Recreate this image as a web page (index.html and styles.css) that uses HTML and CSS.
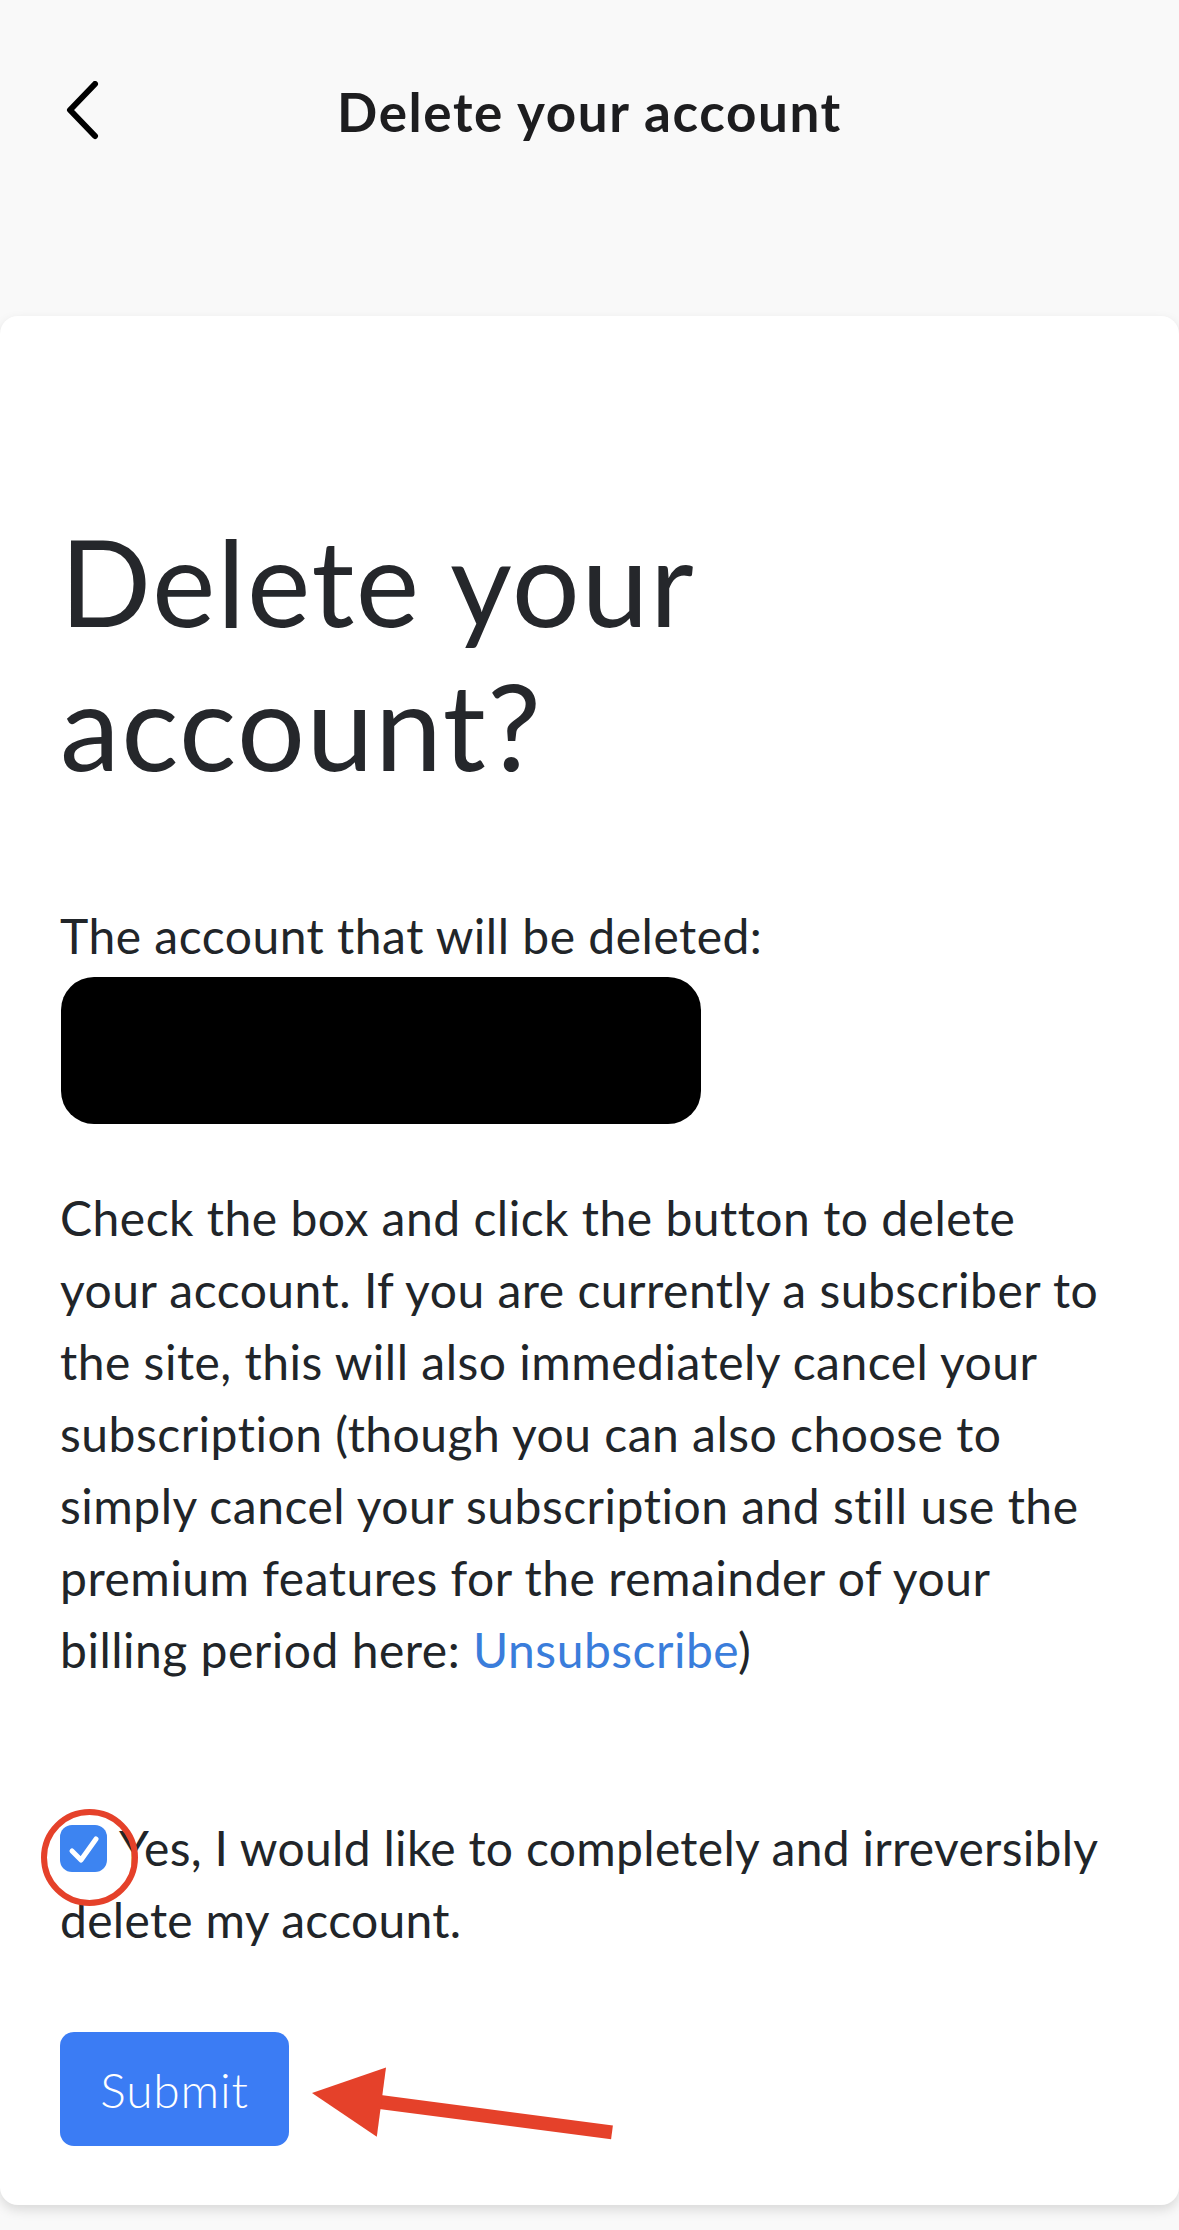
FILE: index.html
```html
<!DOCTYPE html>
<html lang="en">
<head>
<meta charset="utf-8">
<title>Delete your account</title>
<link rel="stylesheet" href="styles.css">
</head>
<body>
<header class="topbar">
  <button class="back" aria-label="Back">
    <svg width="40" height="64" viewBox="0 0 40 64"><path d="M29 3 L4 29 L29 55" fill="none" stroke="#000" stroke-width="6" stroke-linecap="round" stroke-linejoin="round"/></svg>
  </button>
  <h1 class="topbar-title">Delete your account</h1>
</header>
<main class="card">
  <h2 class="heading">Delete your account?</h2>
  <p class="account-label">The account that will be deleted:</p>
  <div class="redacted"></div>
  <p class="body-text">Check the box and click the button to delete your account. If you are currently a subscriber to the site, this will also immediately cancel your subscription (though you can also choose to simply cancel your subscription and still use the premium features for the remainder of your billing period here: <a class="link" href="#">Unsubscribe</a>)</p>
  <label class="confirm">
    <span class="check">
      <svg width="47" height="47" viewBox="0 0 47 47"><path d="M12 26 L21 35 L36 14" fill="none" stroke="#fff" stroke-width="5" stroke-linecap="round" stroke-linejoin="round"/></svg>
    </span>Yes, I would like to completely and irreversibly delete my account.
  </label>
  <div class="actions">
    <button class="submit">Submit</button>
    <svg class="arrow" width="330" height="90" viewBox="0 0 330 90">
      <line x1="78" y1="44.8" x2="312" y2="75.4" stroke="#e5412a" stroke-width="14"/>
      <polygon points="12,36 86,10.4 76.8,79.8" fill="#e5412a"/>
    </svg>
  </div>
</main>
</body>
</html>
```
FILE: styles.css
```css
* { box-sizing: border-box; }
html, body { margin: 0; padding: 0; }
body {
  background: #f9f9f9;
  font-family: Lato, "Noto Sans", sans-serif;
  color: #212529;
  min-height: 2230px;
}
.topbar {
  position: relative;
  height: 222px;
  display: flex;
  align-items: center;
  justify-content: center;
  margin-bottom: 94px;
}
.back {
  position: absolute;
  left: 66px;
  top: 81px;
  border: 0;
  background: none;
  padding: 0;
  width: 40px;
  height: 64px;
}
.back svg { display: block; }
.topbar-title {
  margin: 0;
  font-size: 53px;
  font-weight: 700;
  letter-spacing: 1.6px;
  color: #1d1d1f;
}
.card {
  background: #fff;
  border-radius: 18px;
  box-shadow: 0 5px 12px rgba(0,0,0,0.13);
  padding: 193px 60px 59px 60px;
  min-height: 1889px;
}
.heading {
  margin: 0 0 103px 0;
  font-size: 120px;
  line-height: 144px;
  font-weight: 400;
  letter-spacing: 1.6px;
  color: #25272b;
}
.account-label, .body-text, .confirm {
  font-size: 48px;
  line-height: 72px;
  letter-spacing: 0.5px;
  margin: 0;
}
.redacted {
  margin-top: 5px;
  width: 640px;
  height: 147px;
  background: #000;
  border-radius: 33px;
  margin-left: 1px;
}
.body-text {
  margin-top: 58px;
}
.link {
  color: #3a7ddb;
  text-decoration: none;
}
.confirm {
  display: block;
  margin-top: 126px;
  letter-spacing: 0.3px;
}
.check {
  position: relative;
  display: inline-block;
  width: 47px;
  height: 47px;
  background: #3d84f1;
  border-radius: 12px;
  vertical-align: -6px;
  margin-right: 12px;
}
.check svg { display: block; }
.check::after {
  content: "";
  position: absolute;
  left: -19px;
  top: -16px;
  width: 85px;
  height: 85px;
  border: 6px solid #e5412a;
  border-radius: 50%;
}
.actions {
  position: relative;
  margin-top: 76px;
  height: 114px;
}
.submit {
  height: 114px;
  width: 229px;
  border: 0;
  border-radius: 14px;
  background: #3b7cf4;
  color: #fff;
  font-family: Lato, "Noto Sans", sans-serif;
  font-size: 48px;
  font-weight: 300;
  letter-spacing: 0.8px;
  padding: 0;
}
.arrow {
  position: absolute;
  left: 240px;
  top: 25px;
}
```
